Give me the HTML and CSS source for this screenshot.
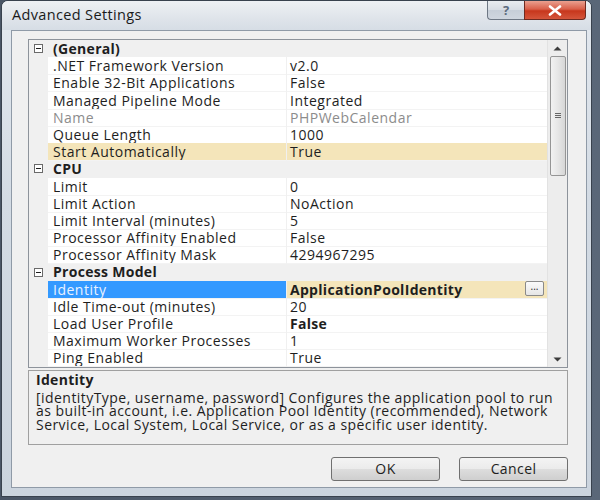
FILE: index.html
```html
<!DOCTYPE html>
<html>
<head>
<meta charset="utf-8">
<link rel="stylesheet" href="styles.css">
</head>
<body>
<div class="window">
  <div class="titlebar">
    <div class="title">Advanced Settings</div>
    <div class="caption-btns">
      <div class="cbtn help">?</div>
      <div class="cbtn close"><svg width="14" height="11" viewBox="0 0 14 11"><path d="M2 1.5 L12 9.5 M12 1.5 L2 9.5" stroke="#fff" stroke-width="2.6" stroke-linecap="round"/></svg></div>
    </div>
  </div>
  <div class="client">
    <div class="grid-box">
      <div class="rows">
        <div class="row cat"><div class="gut"><span class="minus"></span></div><div class="cat-label">(General)</div></div>
        <div class="row"><div class="gut"></div><div class="name">.NET Framework Version</div><div class="val">v2.0</div></div>
        <div class="row"><div class="gut"></div><div class="name">Enable 32-Bit Applications</div><div class="val">False</div></div>
        <div class="row"><div class="gut"></div><div class="name">Managed Pipeline Mode</div><div class="val">Integrated</div></div>
        <div class="row dim"><div class="gut"></div><div class="name">Name</div><div class="val">PHPWebCalendar</div></div>
        <div class="row"><div class="gut"></div><div class="name">Queue Length</div><div class="val">1000</div></div>
        <div class="row hl"><div class="gut"></div><div class="name">Start Automatically</div><div class="val">True</div></div>
        <div class="row cat"><div class="gut"><span class="minus"></span></div><div class="cat-label">CPU</div></div>
        <div class="row"><div class="gut"></div><div class="name">Limit</div><div class="val">0</div></div>
        <div class="row"><div class="gut"></div><div class="name">Limit Action</div><div class="val">NoAction</div></div>
        <div class="row"><div class="gut"></div><div class="name">Limit Interval (minutes)</div><div class="val">5</div></div>
        <div class="row"><div class="gut"></div><div class="name">Processor Affinity Enabled</div><div class="val">False</div></div>
        <div class="row"><div class="gut"></div><div class="name">Processor Affinity Mask</div><div class="val">4294967295</div></div>
        <div class="row cat"><div class="gut"><span class="minus"></span></div><div class="cat-label">Process Model</div></div>
        <div class="row sel"><div class="gut"></div><div class="name">Identity</div><div class="val bold">ApplicationPoolIdentity<span class="ellipsis">...</span></div></div>
        <div class="row"><div class="gut"></div><div class="name">Idle Time-out (minutes)</div><div class="val">20</div></div>
        <div class="row"><div class="gut"></div><div class="name">Load User Profile</div><div class="val bold">False</div></div>
        <div class="row"><div class="gut"></div><div class="name">Maximum Worker Processes</div><div class="val">1</div></div>
        <div class="row"><div class="gut"></div><div class="name">Ping Enabled</div><div class="val">True</div></div>
      </div>
      <div class="scrollbar">
        <div class="arrow"><svg width="9" height="5" viewBox="0 0 9 5"><path d="M0.5 4.5 L4.5 0.5 L8.5 4.5 Z" fill="#3c3c3c"/></svg></div>
        <div class="thumb"><span class="grip"></span></div>
        <div class="track"></div>
        <div class="arrow"><svg width="9" height="5" viewBox="0 0 9 5"><path d="M0.5 0.5 L4.5 4.5 L8.5 0.5 Z" fill="#3c3c3c"/></svg></div>
      </div>
    </div>
    <div class="desc">
      <div class="desc-title">Identity</div>
      <div class="desc-text">[identityType, username, password] Configures the application pool to run as built-in account, i.e. Application Pool Identity (recommended), Network Service, Local System, Local Service, or as a specific user identity.</div>
    </div>
    <div class="buttons">
      <div class="btn">OK</div>
      <div class="btn">Cancel</div>
    </div>
  </div>
</div>
</body>
</html>
```
FILE: styles.css
```css
html, body {
  margin: 0;
  padding: 0;
}
body {
  width: 600px;
  height: 500px;
  overflow: hidden;
  background: linear-gradient(90deg, #4a5666, #5a6778);
  font-family: "Open Sans", "Noto Sans", sans-serif;
  color: #1e1e1e;
}
.window {
  margin-left: 1px;
  width: 591px;
  height: 497px;
  box-sizing: border-box;
  border: 1px solid #39424e;
  border-radius: 7px 7px 0 0;
  background: linear-gradient(180deg, #e4e9ef 0%, #d3dbe4 40%, #cbd4de 100%);
  padding: 0 4px 8px 9px;
  display: flex;
  flex-direction: column;
}
.titlebar {
  height: 29px;
  margin-left: -9px;
  margin-right: -4px;
  display: flex;
  justify-content: space-between;
  align-items: flex-start;
  background: linear-gradient(180deg, #eef1f4 0%, #dfe4ea 60%, #d6dde5 100%);
  border-radius: 6px 6px 0 0;
}
.title {
  padding: 4px 0 0 10px;
  font-size: 14.5px;
  letter-spacing: 0.35px;
  color: #1a1a1a;
}
.caption-btns {
  display: flex;
  margin-right: 5px;
}
.cbtn {
  height: 19px;
  box-sizing: border-box;
  border: 1px solid #6d7784;
  border-top: none;
  display: flex;
  align-items: center;
  justify-content: center;
}
.help {
  width: 37px;
  border-radius: 0 0 0 4px;
  background: linear-gradient(180deg, #e8ecf0 0%, #d6dce3 50%, #c6ced8 51%, #cfd6df 100%);
  font-size: 13px;
  font-weight: bold;
  color: #5b6b7e;
  border-right: none;
}
.close {
  width: 62px;
  border-radius: 0 0 4px 0;
  background: linear-gradient(180deg, #eaa08f 0%, #d9604a 45%, #c7371d 55%, #d4553b 100%);
  border-color: #6e2a20;
}
.client {
  flex: 1;
  background: #f0f0f0;
  border: 1px solid #8f9aa7;
  padding: 8px 18px 0 16px;
  display: flex;
  flex-direction: column;
}
.grid-box {
  height: 329px;
  box-sizing: border-box;
  border: 1px solid #8d939b;
  background: #fff;
  display: flex;
}
.rows {
  flex: 1;
  overflow: hidden;
}
.row {
  height: 17.2px;
  display: grid;
  grid-template-columns: 19px 239px 1fr;
  font-size: 14px;
  letter-spacing: 0.5px;
  line-height: 17px;
  white-space: nowrap;
}
.gut {
  background: #f0f0f0;
  display: flex;
  align-items: center;
  justify-content: center;
}
.name {
  padding-left: 5px;
  border-bottom: 1px solid #f3f3f3;
  border-right: 1px solid #f0f0f0;
  box-sizing: border-box;
  overflow: hidden;
}
.val {
  padding-left: 3px;
  border-bottom: 1px solid #f3f3f3;
  box-sizing: border-box;
  position: relative;
}
.cat {
  background: #f0f0f0;
}
.cat-label {
  grid-column: 2 / 4;
  padding-left: 5px;
  font-weight: bold;
  letter-spacing: 0.3px;
}
.minus {
  width: 9px;
  height: 9px;
  box-sizing: border-box;
  border: 1px solid #6a6a6a;
  background: #fff;
  position: relative;
}
.minus::after {
  content: "";
  position: absolute;
  left: 1px;
  right: 1px;
  top: 3px;
  height: 1px;
  background: #1e1e1e;
}
.dim .name, .dim .val {
  color: #8c8c8c;
}
.hl .name, .hl .val {
  background: #f4e5ba;
}
.sel .name {
  background: #3399ff;
  color: #e8f2ff;
}
.sel .val {
  background: #f4e5ba;
}
.bold {
  font-weight: bold;
  letter-spacing: 0.3px;
}
.ellipsis {
  position: absolute;
  right: 3px;
  top: 0;
  width: 19px;
  height: 15px;
  box-sizing: border-box;
  border: 1px solid #8a8a8a;
  border-radius: 2px;
  background: linear-gradient(180deg, #fafafa, #e6e6e6);
  font-size: 10px;
  font-weight: normal;
  letter-spacing: 0;
  line-height: 9px;
  text-align: center;
}
.scrollbar {
  width: 19px;
  border-left: 1px solid #e2e2e2;
  background: #ededed;
  display: flex;
  flex-direction: column;
  align-items: center;
}
.arrow {
  height: 16px;
  width: 100%;
  display: flex;
  align-items: center;
  justify-content: center;
}
.thumb {
  width: 16px;
  height: 120px;
  box-sizing: border-box;
  border: 1px solid #959595;
  border-radius: 2px;
  background: linear-gradient(90deg, #f2f2f2 0%, #e6e6e6 50%, #d6d6d6 100%);
  display: flex;
  align-items: center;
  justify-content: center;
}
.grip {
  width: 6px;
  height: 6px;
  background: repeating-linear-gradient(180deg, #666 0 1px, transparent 1px 2px);
}
.track {
  flex: 1;
}
.desc {
  margin-top: 2px;
  height: 75px;
  box-sizing: border-box;
  border: 1px solid #a0a0a0;
  padding: 2px 8px 0 7px;
  font-size: 14px;
  letter-spacing: 0.45px;
  line-height: 13.5px;
}
.desc-title {
  font-weight: bold;
  letter-spacing: 0.3px;
  margin-bottom: 4px;
}
.buttons {
  margin-top: 12px;
  display: flex;
  justify-content: flex-end;
  gap: 19px;
}
.btn {
  width: 109px;
  height: 24px;
  box-sizing: border-box;
  border: 1px solid #707070;
  border-radius: 3px;
  background: linear-gradient(180deg, #f4f4f4 0%, #ebebeb 50%, #dddddd 51%, #cfcfcf 100%);
  font-size: 14px;
  letter-spacing: 0.4px;
  line-height: 22px;
  text-align: center;
  color: #1e1e1e;
}
```
